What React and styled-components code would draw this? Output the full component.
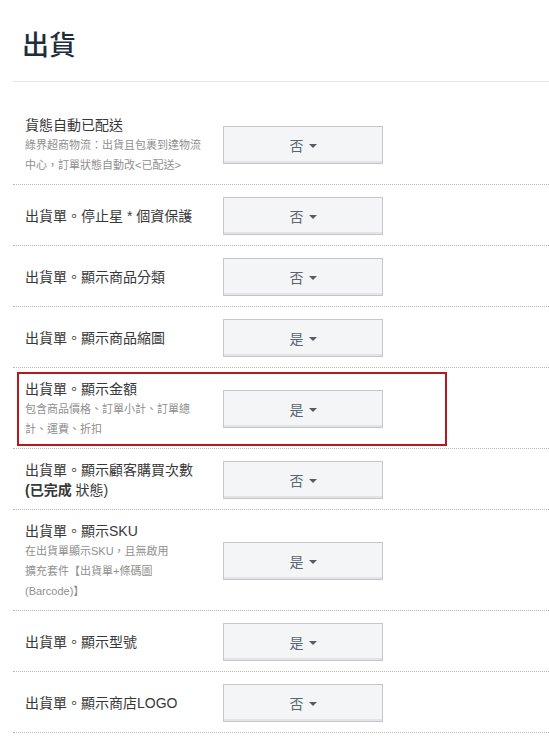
import React from 'react';
import styled, { createGlobalStyle } from 'styled-components';

const GlobalStyle = createGlobalStyle`
  html, body {
    margin: 0;
    padding: 0;
    background: #fff;
  }
  body {
    font-family: "Liberation Sans", "Noto Sans CJK TC", sans-serif;
    color: #333;
  }
`;

const Page = styled.div`
  margin-left: 13px;
`;

const Header = styled.div`
  padding: 30px 9px 19px;
  border-bottom: 1px solid #e4e4e4;
`;

const Title = styled.h1`
  margin: 0;
  font-size: 27px;
  line-height: 32px;
  font-weight: 500;
  color: #222d3b;
`;

const List = styled.div`
  padding-top: 22px;
`;

const Row = styled.div`
  position: relative;
  display: grid;
  grid-template-columns: 210px 160px;
  align-items: center;
  padding: 11px 0 9px;
  border-bottom: 1px dotted #b8b8b8;
`;

const Highlight = styled.div`
  position: absolute;
  left: 4px;
  top: 4px;
  bottom: 2px;
  width: 426px;
  border: 2px solid #b51a1c;
  pointer-events: none;
`;

const LabelCol = styled.div`
  padding: 0 18px 0 12px;
`;

const Label = styled.div`
  font-size: 14px;
  line-height: 20px;
  color: #383838;

  b {
    font-weight: 700;
  }
`;

const Hint = styled.div`
  font-size: 11px;
  line-height: 20px;
  color: #8f8f8f;
`;

const Select = styled.button`
  display: flex;
  align-items: center;
  justify-content: center;
  gap: 5px;
  width: 160px;
  height: 38px;
  margin: 1px 0;
  padding: 0;
  background: #f4f5f7;
  border: 1px solid #c3c6cb;
  border-radius: 0;
  box-shadow: inset 0 -2px 0 #e2e4e8;
  font-family: inherit;
  font-size: 14px;
  color: #5a6572;
  cursor: pointer;
`;

const Caret = styled.span`
  width: 0;
  height: 0;
  border-top: 4px solid #555c66;
  border-left: 4px solid transparent;
  border-right: 4px solid transparent;
  margin-top: 1px;
`;

const settings = [
  {
    label: '貨態自動已配送',
    hint: ['綠界超商物流：出貨且包裹到達物流中心，訂單狀態自動改<已配送>'],
    value: '否',
  },
  { label: '出貨單。停止星 * 個資保護', value: '否' },
  { label: '出貨單。顯示商品分類', value: '否' },
  { label: '出貨單。顯示商品縮圖', value: '是' },
  {
    label: '出貨單。顯示金額',
    hint: ['包含商品價格、訂單小計、訂單總計、運費、折扣'],
    value: '是',
    highlight: true,
  },
  {
    label: (
      <>
        出貨單。顯示顧客購買次數<b>(已完成</b> 狀態)
      </>
    ),
    value: '否',
  },
  {
    label: '出貨單。顯示SKU',
    hint: ['在出貨單顯示SKU，且無啟用', '擴充套件【出貨單+條碼圖(Barcode)】'],
    value: '是',
  },
  { label: '出貨單。顯示型號', value: '是' },
  { label: '出貨單。顯示商店LOGO', value: '否' },
];

const SettingRow = ({ label, hint, value, highlight }) => (
  <Row>
    <LabelCol>
      <Label>{label}</Label>
      {hint && hint.map((line, i) => <Hint key={i}>{line}</Hint>)}
    </LabelCol>
    <div>
      <Select type="button">
        {value}
        <Caret />
      </Select>
    </div>
    {highlight && <Highlight />}
  </Row>
);

export default function App() {
  return (
    <Page>
      <GlobalStyle />
      <Header>
        <Title>出貨</Title>
      </Header>
      <List>
        {settings.map((s, i) => (
          <SettingRow key={i} {...s} />
        ))}
      </List>
    </Page>
  );
}
